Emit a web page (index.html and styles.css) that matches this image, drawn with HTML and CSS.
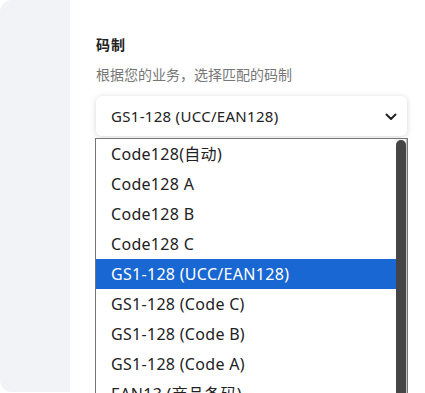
FILE: index.html
```html
<!DOCTYPE html>
<html lang="zh-CN">
<head>
  <meta charset="UTF-8" />
  <meta name="viewport" content="width=device-width, initial-scale=1.0"/>
  <title>码制</title>
  <link rel="stylesheet" href="styles.css">
</head>
<body>
  <div class="page">
    <div class="sidebar"></div>
    <div class="main">
      <div class="field-label">码制</div>
      <div class="field-hint">根据您的业务，选择匹配的码制</div>
      <div class="select">
        <span>GS1-128 (UCC/EAN128)</span>
        <svg class="chevron" width="12" height="8" viewBox="0 0 12 8">
          <path d="M1.5 1.5 L6 6 L10.5 1.5" fill="none" stroke="#222" stroke-width="2" stroke-linecap="round" stroke-linejoin="round"/>
        </svg>
      </div>
      <div class="dropdown">
        <div class="options">
          <div class="option">Code128(自动)</div>
          <div class="option">Code128 A</div>
          <div class="option">Code128 B</div>
          <div class="option">Code128 C</div>
          <div class="option selected">GS1-128 (UCC/EAN128)</div>
          <div class="option">GS1-128 (Code C)</div>
          <div class="option">GS1-128 (Code B)</div>
          <div class="option">GS1-128 (Code A)</div>
          <div class="option">EAN13 (商品条码)</div>
        </div>
        <div class="scroll-track">
          <div class="scroll-thumb"></div>
        </div>
      </div>
    </div>
  </div>
</body>
</html>
```

FILE: styles.css
```css
body {
  margin: 0;
  font-family: 'Noto Sans', 'Noto Sans CJK SC', sans-serif;
  background: #fff;
  overflow: hidden;
}
.page {
  display: flex;
  height: 393px;
}
.sidebar {
  width: 70px;
  height: 392px;
  background: #f2f3f7;
  border-radius: 12px 0 0 12px;
  flex-shrink: 0;
}
.main {
  padding: 35px 0 0 26px;
  width: 313px;
}
.field-label {
  font-size: 14px;
  line-height: 20px;
  font-weight: bold;
  color: #222;
  letter-spacing: 1px;
}
.field-hint {
  margin-top: 10px;
  font-size: 14px;
  line-height: 20px;
  color: #777;
}
.select {
  margin-top: 11px;
  width: 311px;
  height: 40px;
  box-sizing: border-box;
  border-radius: 6px;
  box-shadow: 0 1px 6px rgba(0, 0, 0, 0.16);
  background: #fff;
  display: flex;
  align-items: center;
  justify-content: space-between;
  padding: 0 10px 0 15px;
  font-size: 15px;
  letter-spacing: 0.3px;
  color: #222;
}
.chevron {
  margin-top: 1px;
}
.dropdown {
  margin: 2px 0 0 -1px;
  width: 313px;
  height: 260px;
  box-sizing: border-box;
  border: 1px solid #767676;
  border-bottom: none;
  display: flex;
  background: #fff;
}
.options {
  flex: 1;
}
.option {
  height: 30px;
  line-height: 30px;
  padding-left: 15px;
  font-size: 16px;
  letter-spacing: 0.3px;
  color: #222;
  white-space: nowrap;
}
.option.selected {
  background: #1967d2;
  color: #fff;
}
.scroll-track {
  width: 11px;
  background: #f1f1f1;
  border-right: 1px solid #c4c4c4;
  box-sizing: border-box;
  padding-top: 1px;
}
.scroll-thumb {
  height: 100%;
  background: #454545;
  border-radius: 5px 5px 0 0;
}
```
